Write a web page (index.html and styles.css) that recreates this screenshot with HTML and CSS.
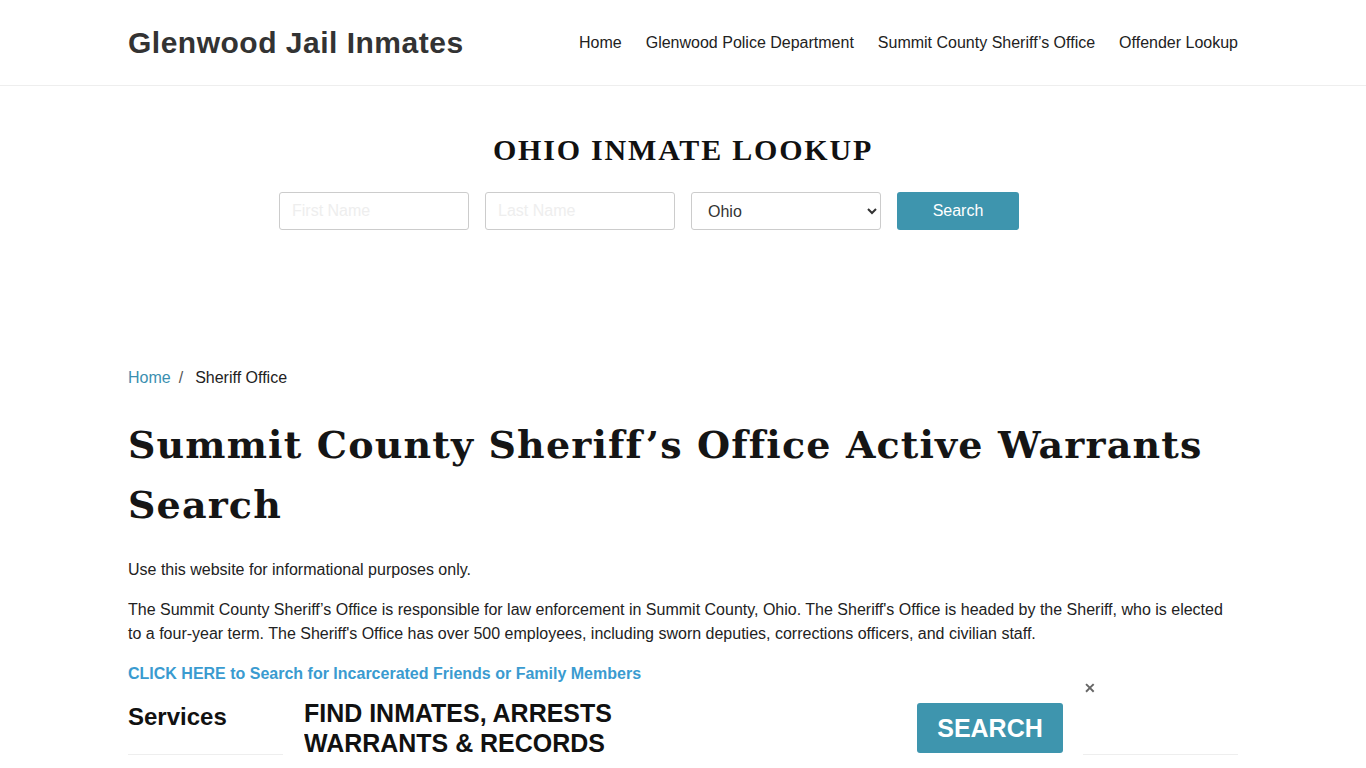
FILE: index.html
```html
<!DOCTYPE html>
<html lang="en">
<head>
<meta charset="utf-8">
<title>Summit County Sheriff's Office Active Warrants Search</title>
<link rel="stylesheet" href="styles.css">
</head>
<body>
<header class="site-header">
  <div class="container header-inner">
    <a class="logo" href="#">Glenwood Jail Inmates</a>
    <nav class="nav">
      <a href="#">Home</a>
      <a href="#">Glenwood Police Department</a>
      <a href="#">Summit County Sheriff’s Office</a>
      <a href="#">Offender Lookup</a>
    </nav>
  </div>
</header>

<section class="lookup">
  <h2 class="lookup-title">OHIO INMATE LOOKUP</h2>
  <form class="lookup-form">
    <input class="field" type="text" placeholder="First Name">
    <input class="field" type="text" placeholder="Last Name">
    <select class="field select"><option>Ohio</option></select>
    <button class="btn" type="button">Search</button>
  </form>
</section>

<main class="container content">
  <div class="breadcrumb"><a href="#">Home</a><span class="sep">/</span><span>Sheriff Office</span></div>
  <h1 class="title">Summit County Sheriff’s Office Active Warrants Search</h1>
  <p>Use this website for informational purposes only.</p>
  <p>The Summit County Sheriff’s Office is responsible for law enforcement in Summit County, Ohio. The Sheriff's Office is headed by the Sheriff, who is elected to a four-year term. The Sheriff's Office has over 500 employees, including sworn deputies, corrections officers, and civilian staff.</p>
  <p><a class="cta" href="#">CLICK HERE to Search for Incarcerated Friends or Family Members</a></p>
  <h3 class="services">Services</h3>
  <hr class="rule">
</main>

<div class="ad">
  <div class="ad-text">FIND INMATES, ARRESTS<br>WARRANTS &amp; RECORDS</div>
  <button class="ad-btn" type="button">SEARCH</button>
  <span class="ad-close">✕</span>
</div>
</body>
</html>
```

FILE: styles.css
```css
* { box-sizing: border-box; }
html, body { margin: 0; padding: 0; }
body {
  font-family: "Liberation Sans", Arial, sans-serif;
  font-size: 16px;
  color: #222;
  background: #fff;
  overflow: hidden;
  height: 768px;
}
a { text-decoration: none; }
.container { width: 1110px; margin: 0 auto; }

.site-header { border-bottom: 1px solid #eee; }
.header-inner {
  height: 85px;
  display: flex;
  align-items: center;
  justify-content: space-between;
}
.logo {
  font-size: 30px;
  font-weight: bold;
  color: #333;
  letter-spacing: 0.5px;
}
.nav { display: flex; gap: 24px; }
.nav a { color: #222; font-size: 16px; }

.lookup { padding-top: 46px; height: 280px; text-align: center; }
.lookup-title {
  margin: 0;
  font-family: "Liberation Serif", "Times New Roman", serif;
  font-weight: bold;
  font-size: 30px;
  letter-spacing: 1.8px;
  color: #111;
  line-height: 36px;
}
.lookup-form {
  margin-top: 24px;
  display: flex;
  justify-content: center;
  gap: 16px;
  padding-right: 68px;
}
.field {
  width: 190px;
  height: 38px;
  border: 1px solid #ccc;
  border-radius: 3px;
  padding: 0 12px;
  font-family: "Liberation Sans", Arial, sans-serif;
  font-size: 16px;
  color: #333;
  background: #fff;
}
.field::placeholder { color: #eee; }
.select { padding: 0 8px 0 12px; }
.btn {
  width: 122px;
  height: 38px;
  border: none;
  border-radius: 3px;
  background: #3e95ae;
  color: #fff;
  font-family: "Liberation Sans", Arial, sans-serif;
  font-size: 16px;
}

.breadcrumb { font-size: 16px; line-height: 24px; color: #222; }
.breadcrumb a { color: #3a8fb0; }
.breadcrumb .sep { margin: 0 12px 0 8px; color: #555; }
.title {
  margin: 25px 0 23px;
  font-family: "DejaVu Serif", Georgia, serif;
  font-weight: bold;
  font-size: 38px;
  line-height: 60px;
  letter-spacing: 1.15px;
  color: #151515;
}
.content p { margin: 0 0 16px; line-height: 24px; font-size: 16px; }
.cta { color: #3a9bd0; font-weight: bold; }
.services { margin: 0; font-size: 24px; line-height: 30px; font-weight: bold; color: #111; }
.rule { margin: 22px 0 0; border: 0; border-top: 1px solid #eee; }

.ad {
  position: fixed;
  left: 283px;
  top: 697px;
  width: 800px;
  height: 80px;
  background: #fff;
  display: flex;
  align-items: flex-start;
  justify-content: space-between;
  padding: 1px 20px 0 21px;
}
.ad-text {
  font-family: "Liberation Sans", Arial, sans-serif;
  font-weight: bold;
  font-size: 26px;
  line-height: 30px;
  color: #111;
  transform: scaleX(0.96);
  transform-origin: left top;
  white-space: nowrap;
}
.ad-btn {
  margin-top: 5px;
  width: 146px;
  height: 50px;
  border: none;
  border-radius: 3px;
  background: #3e95ae;
  color: #fff;
  font-family: "Liberation Sans", Arial, sans-serif;
  font-weight: bold;
  font-size: 25px;
}
.ad-close {
  position: absolute;
  left: 801px;
  top: -17px;
  font-size: 14px;
  color: #666;
  font-weight: bold;
}
```
